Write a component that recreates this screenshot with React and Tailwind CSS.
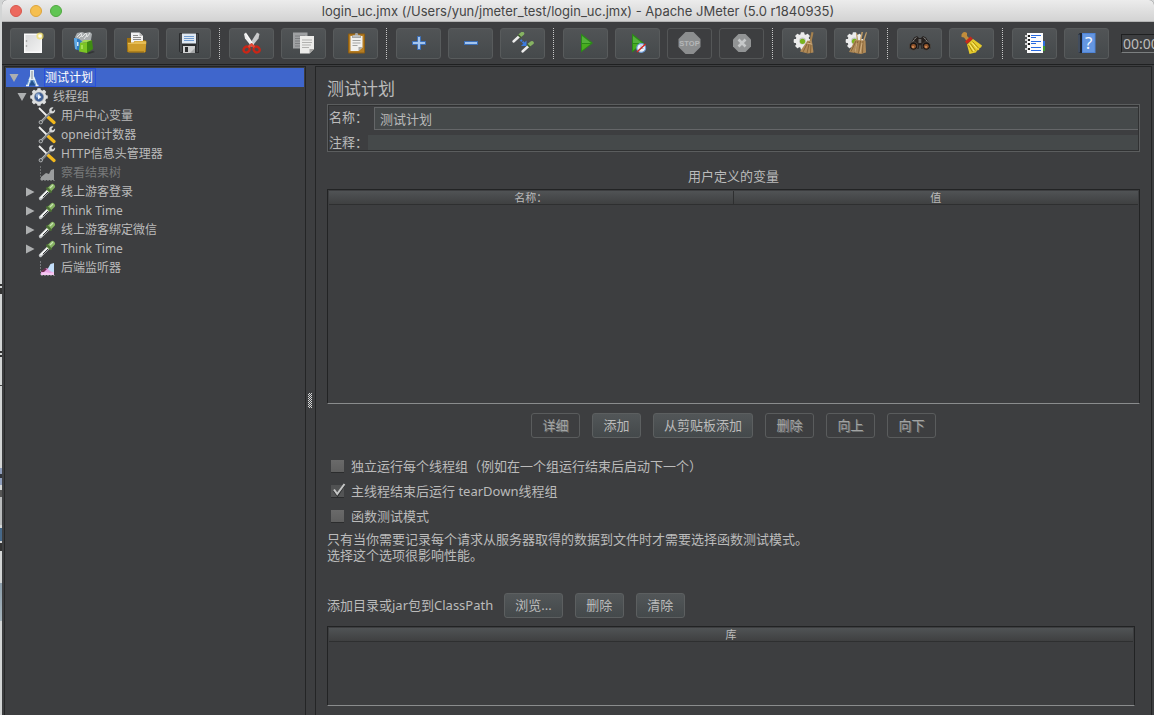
import React from "react";

/* ---------- toolbar icons ---------- */

function Svg({ children }) {
  return (
    <svg width="23" height="23" viewBox="0 0 23 23" className="block shrink-0" aria-hidden="true">
      {children}
    </svg>
  );
}

const NewIcon = () => (
  <Svg>
    <defs>
      <linearGradient id="paper" x1="0" y1="0" x2="1" y2="1">
        <stop offset="0" stopColor="#d9dadb" />
        <stop offset="1" stopColor="#f1f1f1" />
      </linearGradient>
    </defs>
    <rect x="3" y="1.500" width="18" height="19.500" fill="#fafafa" />
    <rect x="4.500" y="3" width="15" height="16.500" fill="url(#paper)" />
    <circle cx="5.500" cy="9" r="0.800" fill="#8d8d8d" />
    <circle cx="5.500" cy="14" r="0.800" fill="#8d8d8d" />
    <circle cx="19" cy="4" r="3.600" fill="#f3e069" opacity="0.750" />
    <circle cx="19" cy="4" r="1.800" fill="#fffef0" />
  </Svg>
);

const TemplatesIcon = () => (
  <Svg>
    <path d="M2 5 4 1l5-1 3 1 5-1 2 2-1 6-7 2-8-2z" fill="#a9adaf" />
    <path d="M4 5 8 1l1 4 4-4 1 4 3-4M6 6l3-3M11 7l3-4" stroke="#e4e6e6" strokeWidth="1" fill="none" />
    <path d="m1 6 5 1 4 3v10l-8-3z" fill="#2e7cc4" />
    <path d="m1 6 3 .6V17.500l-2-.5z" fill="#63abe6" />
    <path d="M20 19l2 1-6 2-3-1z" fill="#333537" />
    <path d="m7 11 7-1v11l-8-1.500z" fill="#7cc524" />
    <path d="m14 10 5-2 1 9-6 4z" fill="#3f8c12" />
    <path d="m7 11 4-3 8 0-5 2z" fill="#a5da58" />
    <rect x="4" y="10" width="1.500" height="4" fill="#d6e9f8" />
    <path d="M8 13h2v4H8z" fill="#a5e052" />
  </Svg>
);

const OpenIcon = () => (
  <Svg>
    <path d="M2 20V6h4l1 2h13l1 1v11z" fill="#9b6f12" />
    <path d="M6 .5h8.500L18 4v9H6z" fill="#f2f2f2" />
    <path d="M14.500.5V4H18z" fill="#b9b9b9" />
    <path d="M8 3.500h5M8 5.500h8M8 7.500h8" stroke="#8b8b8b" strokeWidth="1" />
    <path d="M2.500 10.500h6l1-1.500h11.500l.5 1-1.500 10.500H3.500z" fill="#cf9d2c" />
    <path d="M3 11h6l1-1.500h11v2.500H3z" fill="#e6bd55" />
    <path d="M4 19.500h15v1H4z" fill="#8d6410" />
  </Svg>
);

const SaveIcon = () => (
  <Svg>
    <path d="M2 2q0-1 1-1h18q1 0 1 1v19H4l-2-1.500z" fill="#2a2c2e" />
    <path d="M3 2h2v18H3zM19.500 2H21v18h-1.500z" fill="#484b4e" />
    <rect x="5" y="1.500" width="14" height="10" fill="#dfe8f2" />
    <path d="M7 4.500h10M7 6.500h10M7 8.500h10" stroke="#6f9bd0" strokeWidth="1" />
    <rect x="6" y="14" width="12" height="7" fill="#cfd0d1" />
    <rect x="8" y="15" width="3" height="5" fill="#2c2e30" />
    <path d="M13 21l5-5v5z" fill="#a4a6a8" />
  </Svg>
);

const CutIcon = () => (
  <Svg>
    <path d="M17 .5 19.500 2 18.500 6.500 12 14.500 9.500 12.500z" fill="#c9cacb" />
    <path d="M6 .5 4 2l1 4.500 6.500 8 2.500-2z" fill="#ececec" />
    <path d="M6 2l6.500 10" stroke="#fff" strokeWidth="1" />
    <circle cx="11.700" cy="12" r="1" fill="#6f6f6f" />
    <ellipse cx="6.600" cy="17.500" rx="3.200" ry="2.800" transform="rotate(-35 6.600 17.500)" fill="none" stroke="#c92617" strokeWidth="2.400" />
    <ellipse cx="16.600" cy="17.500" rx="3.200" ry="2.800" transform="rotate(35 16.600 17.500)" fill="none" stroke="#c92617" strokeWidth="2.400" />
    <path d="m8.500 15 3-2.500 3 2.500" stroke="#e64a36" strokeWidth="2.400" fill="none" />
  </Svg>
);

const CopyIcon = () => (
  <Svg>
    <rect x="1" y="0.500" width="14.500" height="16" fill="#9fa1a3" />
    <path d="M3 4h10M3 6.500h10M3 9h5M3 11.500h5M3 14h5" stroke="#7d7f81" strokeWidth="1" />
    <path d="M8 4h14v13l-4.500 4.500H8z" fill="#ececea" />
    <path d="M22 17h-4.500v4.500z" fill="#a6a6a4" />
    <path d="M10 8h10M10 10.500h10M10 13h9M10 15.500h7" stroke="#b1b1af" strokeWidth="1" />
  </Svg>
);

const PasteIcon = () => (
  <Svg>
    <rect x="4" y="1.500" width="17" height="20" rx="1" fill="#8f5f13" />
    <rect x="5" y="2.500" width="15" height="18" fill="#b57d23" />
    <path d="M6.500 4h12v11.500L14.500 19h-8z" fill="#f1f1ef" />
    <path d="M18.500 15h-4v4z" fill="#a9a9a7" />
    <path d="M8.500 8.500h8M8.500 11h8M8.500 13.500h5" stroke="#a3a3a1" strokeWidth="1" />
    <path d="M8 6V3.500h2.500L11.500 1h2l1 2.500H17V6z" fill="#a5a7a6" />
    <path d="M9 4h7" stroke="#d6d8d7" />
  </Svg>
);

const PlusIcon = () => (
  <Svg>
    <path d="M10.500 4.500h3v5h5v3h-5v5h-3v-5h-5v-3h5z" fill="#a3c5ef" stroke="#3b6fb8" strokeWidth="1" />
  </Svg>
);

const MinusIcon = () => (
  <Svg>
    <rect x="5.500" y="9.500" width="13" height="3" fill="#a3c5ef" stroke="#3b6fb8" strokeWidth="1" />
  </Svg>
);

const ToggleIcon = () => (
  <Svg>
    <path d="M2.500 9.500 8.500 4" stroke="#ececec" strokeWidth="2.400" strokeLinecap="round" />
    <path d="m9 3.500 2.500-2" stroke="#86b262" strokeWidth="3.600" strokeLinecap="round" />
    <path d="m7.200 2.800 3 3" stroke="#3c5b2d" strokeWidth="1.300" />
    <path d="M11.500 19.500 17.500 14" stroke="#ececec" strokeWidth="2.400" strokeLinecap="round" />
    <path d="m18 13 3-2.200" stroke="#86b262" strokeWidth="3.600" strokeLinecap="round" />
    <path d="m16.200 12.300 3 3" stroke="#3c5b2d" strokeWidth="1.300" />
    <path d="M9.500 8l4 3.500" stroke="#3c7be0" strokeWidth="2" strokeDasharray="2 0.800" />
    <path d="M15.500 8.500v5.500H10z" fill="#3c7be0" />
  </Svg>
);

const PlayShape = ({ x }) => (
  <>
    <path d={`M${x} 1.500v19l12-9.500z`} fill="#2b8a18" />
    <path d={`M${x + 1} 4v7h9z`} fill="#6fcb52" opacity="0.600" />
    <path d={`M${x + 1} 12v6.500l8.500-6.500z`} fill="#49ad1f" />
  </>
);

const StartIcon = () => (
  <Svg>
    <PlayShape x={7} />
  </Svg>
);

const StartNoPauseIcon = () => (
  <Svg>
    <PlayShape x={6} />
    <circle cx="15.200" cy="16" r="4.400" fill="#eef4fb" stroke="#6b9bd8" strokeWidth="1.200" />
    <path d="M15 13v3.500h2.500" stroke="#8fa9c8" strokeWidth="0.800" fill="none" />
    <path d="m11 20 8.500-8" stroke="#cf2a20" strokeWidth="1.500" />
  </Svg>
);

const StopIcon = () => (
  <Svg>
    <path d="M7.500 0h8L22.500 7v8l-7 7h-8L.500 15V7z" fill="#8c8e8f" />
    <text x="11.500" y="14" textAnchor="middle" fontSize="7.500" fontWeight="700" fontFamily="'Liberation Sans', sans-serif" fill="#b5b7b8">
      STOP
    </text>
  </Svg>
);

const ShutdownIcon = () => (
  <Svg>
    <path d="M8.500 2h7L21 7.500v7L15.500 20h-7L3 14.500v-7z" fill="#929495" />
    <path d="m8.500 7.500 7 7M15.500 7.500l-7 7" stroke="#c6c8c9" strokeWidth="2.600" />
  </Svg>
);

const GearShape = ({ fill = "#ececec" }) => (
  <>
    <g fill={fill}>
      <circle cx="9.500" cy="9" r="7" />
      {[0, 45, 90, 135].map((a) => (
        <rect key={a} x="7.600" y="0.200" width="3.800" height="17.600" rx="0.800" transform={`rotate(${a} 9.500 9)`} />
      ))}
    </g>
    <circle cx="9.500" cy="9" r="3.400" fill="#c6c8c4" />
    <circle cx="9.500" cy="9.300" r="2.600" fill="#79b41e" />
  </>
);

const ClearIcon = () => (
  <Svg>
    <GearShape />
    <path d="M18.500 0 20.500.5 18.500 10l-2-1z" fill="#a5814e" />
    <path d="m14.500 8.500 4.500 1 1.500 11-5.500 1-8-2z" fill="#b08a58" />
    <path d="m15 10-5 10M16.500 10l-2.500 11M18 11l-.5 10" stroke="#7d5c30" strokeWidth="0.800" />
    <path d="m13.700 11 5.500 1.200" stroke="#d8b98c" strokeWidth="1" />
  </Svg>
);

const ClearAllIcon = () => (
  <Svg>
    <GearShape />
    <path d="M11 1.500 12 1l1.500 9h-1.500zM16.500 0h1.500l-2 10h-1.500zM21 0l1 .5-3 10-1.500-1z" fill="#c09d68" />
    <path d="m10 8 10.500.5.5 12-5 1.500-12-2z" fill="#b08a58" />
    <path d="m11 9-5 10.500M13 9l-3.500 12M15.500 9l-2 12.500M18 9l-.5 12" stroke="#7d5c30" strokeWidth="0.800" />
    <path d="m12 11-2 9M17 11l-2 10" stroke="#d8b98c" strokeWidth="0.800" />
  </Svg>
);

const SearchIcon = () => (
  <Svg>
    <path d="M6 5.500 9 4l2 2h2l2-2 3 1.500 4.500 8v3l-9 .5-1-4h-1l-1 4-9-.5v-3z" fill="#26211f" />
    <path d="M6 7.500 8.500 5.500M18 7.500l-2.500-2M3 12l3-4M21 12l-3-4" stroke="#8e8e8c" strokeWidth="1" />
    <circle cx="5.500" cy="14" r="4.200" fill="#191615" stroke="#56504c" strokeWidth="0.800" />
    <circle cx="18.300" cy="14" r="4.200" fill="#191615" stroke="#56504c" strokeWidth="0.800" />
    <circle cx="5.500" cy="14.300" r="2.400" fill="#95562c" />
    <circle cx="18.300" cy="14.300" r="2.400" fill="#95562c" />
    <circle cx="5" cy="15" r="1" fill="#d8955f" />
    <circle cx="18" cy="15" r="1" fill="#d8955f" />
    <rect x="10.500" y="7" width="2.800" height="4" fill="#6b6866" />
  </Svg>
);

const ResetSearchIcon = () => (
  <Svg>
    <path d="M1.500 2.500 3 .5q2-1 4 .5v3l3 3L7 9.500 4 5.500 1.500 5z" fill="#c08d3c" />
    <path d="m5 9.500 5.500-5 2.500 2.500-6 5z" fill="#c52a1b" />
    <path d="M7 12.500l6-5.500 9 6.500-1 2-1.500.5-.5 2-2 .5-1 2-2.500.5-4 1z" fill="#e6cb2b" />
    <path d="m8.500 13 4 7M10.500 11.500l5 7M12.500 9.500l6 6.500" stroke="#a98a10" strokeWidth="1" />
    <path d="m9.500 12.500 4.500 6.500M12 10.500l5 6" stroke="#fbf08a" strokeWidth="0.900" />
  </Svg>
);

const FunctionHelperIcon = () => (
  <Svg>
    <rect x="17" y="9" width="5" height="5" fill="#2f6fde" />
    <rect x="17" y="14" width="5" height="5" fill="#3f9a2d" />
    <rect x="4" y="1" width="16" height="20" fill="#fdfdfd" />
    {[3, 7, 11, 16].map((y) => (
      <g key={y}>
        <rect x="2" y={y} width="4" height="2" fill="#d0d0d0" />
        <rect x="5" y={y} width="2" height="2" fill="#1d1d1d" />
      </g>
    ))}
    <path d="M8 3.500h10M8 5.500h5M8 9.500h10M8 11.500h5M8 15.500h10M8 18.500h10" stroke="#2a6be0" strokeWidth="1" />
  </Svg>
);

const HelpIcon = () => (
  <Svg>
    <path d="M3 2.500 5 1h3v20H4l-1-1z" fill="#1c2330" />
    <path d="M4 2.500v18" stroke="#7f8da3" strokeWidth="0.800" />
    <rect x="7" y="1" width="13.500" height="20" fill="#4f84d6" />
    <rect x="8" y="2" width="11.500" height="18" fill="#6496e0" />
    <text x="13.700" y="17" textAnchor="middle" fontSize="17" fontFamily="'Noto Sans', sans-serif" fill="#f2f7ff">
      ?
    </text>
  </Svg>
);

/* ---------- tree icons ---------- */

const TreeSvg = ({ children }) => (
  <svg width="18" height="18" viewBox="0 0 18 18" className="block shrink-0" aria-hidden="true">
    {children}
  </svg>
);

const PlanIcon = () => (
  <TreeSvg>
    <path d="M7 1h4v5.500l4 9.500H3.500L7 6.500z" fill="#6f9fd0" />
    <path d="M7 1h4v6.500l1.500 3.500H5.500L7 7.500z" fill="#dfe8f0" />
    <path d="M8 8 5 16.500M10.500 8l3.500 8.500" stroke="#f2f6fa" strokeWidth="1" />
    <path d="M6 16.500 9 11l3.500 5.500z" fill="#23508c" />
    <path d="M3 16.500h3M12.500 16.500h3" stroke="#e8eef4" strokeWidth="1.400" />
    <path d="M9 2v8" stroke="#8b9096" strokeWidth="1" />
  </TreeSvg>
);

const ThreadGroupIcon = () => (
  <TreeSvg>
    <g fill="#dcdedf">
      <circle cx="9" cy="9" r="7.300" />
      {[0, 45, 90, 135].map((a) => (
        <rect key={a} x="7.200" y="0.200" width="3.600" height="17.600" rx="0.800" transform={`rotate(${a} 9 9)`} />
      ))}
    </g>
    <circle cx="9" cy="9" r="5" fill="#8a97aa" />
    <circle cx="9" cy="9" r="4.200" fill="#3f6097" />
    <circle cx="8" cy="7.500" r="2.200" fill="#8fabd4" />
    <path d="M8 6.500 11.500 9 8 11.500z" fill="#f1f5fb" />
  </TreeSvg>
);

const ConfigIcon = () => (
  <TreeSvg>
    <path d="M1 1 10 10" stroke="#f0f0ee" strokeWidth="1.800" />
    <path d="m10.500 10.500 5.500 5" stroke="#f2b81c" strokeWidth="3.200" strokeLinecap="round" />
    <path d="M2.500 15.500 13 5" stroke="#b4b7b9" strokeWidth="2.400" />
    <path d="M3 15.500 13 5.500" stroke="#4a4d4f" strokeWidth="0.900" />
    <path d="M15.500.500q-3-.8-4 1.500-.8 2 .3 3.500 1.800 1.500 4 .5 1.800-1.200 1.200-3.500L14.800 4.500 13.300 3z" fill="#d9dadb" />
    <circle cx="2.800" cy="15.200" r="1.700" fill="#4a4d4f" stroke="#b2b4b6" strokeWidth="1" />
  </TreeSvg>
);

const ListenerIcon = ({ muted }) => (
  <TreeSvg>
    <path d="M2.500 2v14.500H17" stroke={muted ? "#6d6f70" : "#77797c"} strokeWidth="1" strokeDasharray="2 1" fill="none" />
    <path d="M3 16v-3l5-4 3 1 2-4 3-1v11z" fill={muted ? "#9a9c9d" : "#e9a5e6"} />
    {!muted && <path d="m10 9.500 2.500-4.500 3.500-1v9q-3 1-6-3z" fill="#c3defa" />}
    {!muted && <path d="m3 13 4-4 2 1-3 3z" fill="#6b2c4a" />}
    {!muted && <path d="m3 16 1-2 3-1 5 1 4-1v3z" fill="#f6c8f2" />}
  </TreeSvg>
);

const SamplerIcon = () => (
  <TreeSvg>
    <path d="M2.500 15.500 10.500 7.500" stroke="#c4c7c9" strokeWidth="3.200" strokeLinecap="round" />
    <path d="M2.500 15 10 7.500" stroke="#fff" strokeWidth="1.200" />
    <path d="m5 14 5-5" stroke="#34383a" strokeWidth="1" />
    <path d="m11.500 6.500 3-3" stroke="#86b262" strokeWidth="5" strokeLinecap="round" />
    <path d="m8.500 4.500 5 5" stroke="#4d7036" strokeWidth="2" />
    <path d="m12 5 3-3" stroke="#cbe5b3" strokeWidth="1.200" />
  </TreeSvg>
);

/* ---------- data ---------- */

const toolbarGroups = [
  [
    ["新建", NewIcon],
    ["模板", TemplatesIcon],
    ["打开", OpenIcon],
    ["保存", SaveIcon],
  ],
  [
    ["剪切", CutIcon],
    ["复制", CopyIcon],
    ["粘贴", PasteIcon],
  ],
  [
    ["展开", PlusIcon],
    ["收起", MinusIcon],
    ["切换", ToggleIcon],
  ],
  [
    ["启动", StartIcon],
    ["不停顿开始", StartNoPauseIcon],
    ["停止", StopIcon, true],
    ["关闭", ShutdownIcon, true],
  ],
  [
    ["清除", ClearIcon],
    ["清除全部", ClearAllIcon],
  ],
  [
    ["查找", SearchIcon],
    ["重置搜索", ResetSearchIcon],
  ],
  [
    ["函数助手", FunctionHelperIcon],
    ["帮助", HelpIcon],
  ],
];

const treeItems = [
  { label: "用户中心变量", icon: ConfigIcon },
  { label: "opneid计数器", icon: ConfigIcon },
  { label: "HTTP信息头管理器", icon: ConfigIcon },
  { label: "察看结果树", icon: ListenerIcon, muted: true },
  { label: "线上游客登录", icon: SamplerIcon, closed: true },
  { label: "Think Time", icon: SamplerIcon, closed: true },
  { label: "线上游客绑定微信", icon: SamplerIcon, closed: true },
  { label: "Think Time", icon: SamplerIcon, closed: true },
  { label: "后端监听器", icon: ListenerIcon },
];

/* ---------- parts ---------- */

function Arrow({ open }) {
  return (
    <svg width="10" height="10" viewBox="0 0 10 10" className="block shrink-0" aria-hidden="true">
      <path d={open ? "M.5 1h9L5 9z" : "M1 .500v9L9.500 5z"} fill="#adafb0" />
    </svg>
  );
}

function ToolButton({ label, icon: Icon, disabled }) {
  return (
    <button
      type="button"
      aria-label={label}
      disabled={disabled}
      className={
        disabled
          ? "flex h-[31px] w-[45px] shrink-0 items-center justify-center rounded-[3px] border border-[#545657]"
          : "flex h-[31px] w-[45px] shrink-0 items-center justify-center rounded-[3px] border border-[#585b5c] bg-linear-to-b from-[#515456] to-[#45494b]"
      }
    >
      <Icon />
    </button>
  );
}

function TextButton({ children, disabled }) {
  return (
    <button
      type="button"
      disabled={disabled}
      className={
        disabled
          ? "h-[25px] min-w-[49px] rounded-[3px] border border-[#5a5c5d] px-[10px] text-[13px] leading-[23px] text-[#a2a4a4] [text-shadow:1px_1px_0_#6b6d6d]"
          : "h-[25px] min-w-[49px] rounded-[3px] border border-[#5c5f60] bg-linear-to-b from-[#525658] to-[#44494b] px-[10px] text-[13px] leading-[23px] text-[#bbbbbb]"
      }
    >
      {children}
    </button>
  );
}

function CheckRow({ id, label, checked }) {
  return (
    <div className="flex h-[25px] items-center gap-[7px] pl-[4px]">
      <span className="relative flex shrink-0">
        <input
          id={id}
          type="checkbox"
          defaultChecked={checked}
          className="peer size-[13px] appearance-none border-b border-[#2b2c2d] bg-linear-to-b from-[#6a6a6a] to-[#5f5f5f] checked:from-[#505152] checked:to-[#545556]"
        />
        <svg width="16" height="16" viewBox="0 0 16 16" className="pointer-events-none absolute -top-[3px] left-0 hidden peer-checked:block" aria-hidden="true">
          <path d="M3 9l3.500 4.500L13 3.500" stroke="#2a2b2c" strokeWidth="2" fill="none" />
          <path d="M3 7.500 6.200 12 13.500 2" stroke="#c4c5c5" strokeWidth="2" fill="none" />
        </svg>
      </span>
      <label htmlFor={id} className="pb-[2px] text-[13px] leading-[18px]">
        {label}
      </label>
    </div>
  );
}

const headCell =
  "h-[14px] border-b border-[#2e2f30] bg-linear-to-b from-[#505355] to-[#3f4041] p-0 text-center text-[11px] leading-[13px] font-normal";

/* Slice of the desktop seen beside the window. */
function DesktopEdge() {
  return (
    <div className="flex w-[2px] shrink-0 flex-col bg-[#d3d5d5]" aria-hidden="true">
      <div className="mt-[284px] h-[2px] bg-[#333]" />
      <div className="mt-[2px] h-[6px] bg-[#333]" />
      <div className="mt-[57px] h-[2px] bg-[#333]" />
      <div className="mt-[2px] h-[2px] bg-[#333]" />
      <div className="mt-[28px] h-px bg-[#444]" />
      <div className="mt-[82px] h-[6px] bg-[#8e9dbb]" />
      <div className="h-[4px] bg-[#30343c]" />
      <div className="h-[7px] bg-[#8e9dbb]" />
      <div className="mt-[5px] h-[7px] bg-[#555]" />
      <div className="h-[28px] bg-[#b9bbbc]" />
      <div className="mt-[3px] h-[13px] bg-[#47698a]" />
      <div className="mt-[2px] h-[8px] bg-[#333]" />
      <div className="mt-[32px] h-[38px] bg-linear-to-b from-[#8d9fac] to-[#a6b4bc]" />
    </div>
  );
}

function TitleBar() {
  return (
    <header className="flex h-[22px] shrink-0 items-center rounded-t-[5px] border-b border-[#b4b4b4] bg-linear-to-b from-[#ececec] to-[#d3d3d3]">
      <div className="flex flex-1 gap-[8px] pl-[8px]">
        <button type="button" aria-label="关闭窗口" className="size-[12px] rounded-full border border-[#d8574c] bg-[#ec695e]" />
        <button type="button" aria-label="最小化" className="size-[12px] rounded-full border border-[#dda43b] bg-[#f5bf4f]" />
        <button type="button" aria-label="缩放" className="size-[12px] rounded-full border border-[#50a83f] bg-[#61c554]" />
      </div>
      <h1 className="text-[13px] leading-[20px] whitespace-nowrap text-[#454545] font-[Inter,sans-serif]">
        login_uc.jmx (/Users/yun/jmeter_test/login_uc.jmx) - Apache JMeter (5.0 r1840935)
      </h1>
      <div className="flex-1 pr-[8px]" />
    </header>
  );
}

function Toolbar() {
  return (
    <div role="toolbar" aria-label="工具栏" className="flex h-[43px] shrink-0 items-center overflow-hidden border-b border-[#1f2021] pt-px pl-[8px]">
      {toolbarGroups.map((group, i) => (
        <React.Fragment key={i}>
          {i > 0 && <div className="mr-[9px] ml-[8px] h-[31px] w-px shrink-0 border-l border-dotted border-[#c8c8c8]" />}
          <div className="flex gap-[7px]">
            {group.map(([label, icon, disabled]) => (
              <ToolButton key={label} label={label} icon={icon} disabled={disabled} />
            ))}
          </div>
        </React.Fragment>
      ))}
      <input
        aria-label="运行时间"
        readOnly
        defaultValue="00:00:00"
        className="ml-[12px] h-[19px] min-w-0 flex-1 border-t border-b border-l border-t-[#1f2021] border-b-[#7c7f80] border-l-[#1f2021] bg-transparent pl-px text-[14px] leading-[17px] text-[#bbbbbb]"
      />
    </div>
  );
}

function Tree() {
  return (
    <nav aria-label="测试计划树" className="w-[302px] shrink-0 border border-b-0 border-[#242526] p-px pb-0 text-[12px] leading-[19px] text-[#bbbbbb]">
      <ul>
        <li>
          <div className="flex h-[19px] items-center bg-[#3f66cc] pl-[3px] text-white">
            <button type="button" aria-label="折叠 测试计划">
              <Arrow open />
            </button>
            <span className="mr-[3px] ml-[4px]">
              <PlanIcon />
            </span>
            <span className="h-[19px] border border-[#2b50dd] pr-[2px] leading-[17px]">测试计划</span>
          </div>
          <ul>
            <li>
              <div className="flex h-[19px] items-center pl-[11px]">
                <button type="button" aria-label="折叠 线程组">
                  <Arrow open />
                </button>
                <span className="mr-[5px] ml-[3px]">
                  <ThreadGroupIcon />
                </span>
                线程组
              </div>
              <ul>
                {treeItems.map(({ label, icon: Icon, muted, closed }, i) => (
                  <li key={i} className="flex h-[19px] items-center pl-[19px]">
                    <span className="flex w-[10px] shrink-0">
                      {closed && (
                        <button type="button" aria-label={`展开 ${label}`}>
                          <Arrow />
                        </button>
                      )}
                    </span>
                    <span className="mr-[5px] ml-[3px]">
                      <Icon muted={muted} />
                    </span>
                    <span className={muted ? "text-[#777979]" : ""}>{label}</span>
                  </li>
                ))}
              </ul>
            </li>
          </ul>
        </li>
      </ul>
    </nav>
  );
}

function Splitter() {
  return (
    <div className="flex w-[9px] shrink-0 items-center justify-center pt-[20px]">
      <svg width="5" height="15" viewBox="0 0 5 15" aria-hidden="true">
        {[0, 2, 4, 6, 8, 10, 12, 14].map((y) => (
          <g key={y} fill="#d5d6d6">
            <rect x="1" y={y} width="1" height="1" />
            <rect x="3" y={y} width="1" height="1" />
            <rect x="0" y={y + 1} width="1" height="1" />
            <rect x="2" y={y + 1} width="1" height="1" />
          </g>
        ))}
      </svg>
    </div>
  );
}

function PlanForm() {
  return (
    <main className="mr-[2px] flex min-w-0 flex-1 flex-col border border-b-0 border-[#242526] pr-[11px] pb-[9px] pl-[11px] text-[13px] text-[#bbbbbb]">
      <h2 className="mt-[9px] mb-[2px] text-[17px] leading-[26px]">测试计划</h2>

      <div className="border border-[#5b5d5e] pl-px outline -outline-offset-2 outline-[#303132]">
        <div className="flex items-start pt-[2px]">
          <label htmlFor="plan-name" className="w-[45px] shrink-0 leading-[20px]">
            名称：
          </label>
          <input
            id="plan-name"
            defaultValue="测试计划"
            className="h-[23px] min-w-0 flex-1 border border-[#646668] bg-[#45494a] px-[5px] text-[13px] leading-[21px] text-[#bbbbbb] outline-none"
          />
        </div>
        <div className="flex items-start pt-[5px]">
          <label htmlFor="plan-comment" className="w-[39px] shrink-0 leading-[14px]">
            注释：
          </label>
          <input id="plan-comment" className="h-[16px] min-w-0 flex-1 bg-[#45494a] px-[5px] text-[13px] text-[#bbbbbb] outline-none" />
        </div>
      </div>

      <h3 className="mt-[14px] mb-[3px] text-center leading-[20px]">用户定义的变量</h3>

      <div className="min-h-[120px] flex-1 border border-[#222324] border-b-[#8a8c8d] p-px">
        <table aria-label="用户定义的变量" className="w-full table-fixed border-separate border-spacing-0">
          <thead>
            <tr>
              <th scope="col" className={`${headCell} border-r`}>
                名称：
              </th>
              <th scope="col" className={headCell}>
                值
              </th>
            </tr>
          </thead>
          <tbody />
        </table>
      </div>

      <div className="mt-[9px] flex justify-center gap-[12px]">
        <TextButton disabled>详细</TextButton>
        <TextButton>添加</TextButton>
        <TextButton>从剪贴板添加</TextButton>
        <TextButton disabled>删除</TextButton>
        <TextButton disabled>向上</TextButton>
        <TextButton disabled>向下</TextButton>
      </div>

      <div className="mt-[16px]">
        <CheckRow id="serialize" label="独立运行每个线程组（例如在一个组运行结束后启动下一个）" />
        <CheckRow id="teardown" label="主线程结束后运行 tearDown线程组" checked />
        <CheckRow id="functional" label="函数测试模式" />
      </div>
      <p className="mt-[2px] leading-[16px]">
        只有当你需要记录每个请求从服务器取得的数据到文件时才需要选择函数测试模式。
        <br />
        选择这个选项很影响性能。
      </p>

      <div className="mt-[30px] flex items-center">
        <span className="mr-[11px]">添加目录或jar包到ClassPath</span>
        <div className="flex gap-[12px]">
          <TextButton>浏览...</TextButton>
          <TextButton>删除</TextButton>
          <TextButton>清除</TextButton>
        </div>
      </div>

      <div className="mt-[8px] mr-[5px] h-[80px] shrink-0 border border-[#222324] border-b-[#8a8c8d] p-px">
        <table aria-label="ClassPath" className="w-full table-fixed border-separate border-spacing-0">
          <thead>
            <tr>
              <th scope="col" className={headCell}>
                库
              </th>
            </tr>
          </thead>
          <tbody />
        </table>
      </div>
    </main>
  );
}

export default function App() {
  return (
    <div className="flex min-h-screen bg-[#d3d5d5] font-['Noto_Sans','Noto_Sans_CJK_SC',sans-serif]">
      <DesktopEdge />
      <div className="flex min-w-0 flex-1 flex-col rounded-t-[5px] bg-[#3d3e40]">
        <TitleBar />
        <Toolbar />
        <div className="flex flex-1 pt-px pl-[2px]">
          <Tree />
          <Splitter />
          <PlanForm />
        </div>
      </div>
    </div>
  );
}
